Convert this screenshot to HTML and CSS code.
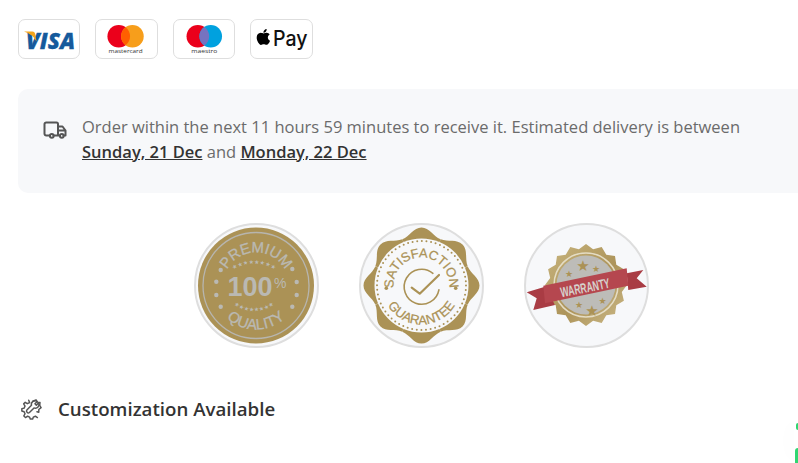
FILE: index.html
```html
<!DOCTYPE html>
<html lang="en">
<head>
<meta charset="utf-8">
<title>Delivery and guarantees</title>
<link rel="stylesheet" href="styles.css">
</head>
<body>
<main class="page">
  <ul class="pay-list">
    <li class="pay-card">
      <svg class="pay-logo" viewBox="0 0 60.330 38">
        <text class="visa-text" x="7" y="28.500" textLength="49" lengthAdjust="spacingAndGlyphs">VISA</text>
        <path class="visa-flick" d="M5 11.500H13.500Q15.500 11.700 16 13.500L17.500 21.500Q14 14.500 5 11.500Z"/>
      </svg>
    </li>
    <li class="pay-card">
      <svg class="pay-logo" viewBox="0 0 60.330 38">
        <circle class="mc-red" cx="22.700" cy="16.300" r="11.300"/>
        <circle class="mc-orange" cx="36.400" cy="16.300" r="11.300"/>
        <path class="mc-mid" d="M29.550 7.300a11.300 11.300 0 0 1 0 18a11.300 11.300 0 0 1 0-18Z"/>
        <text class="brand-small" x="29.600" y="33" textLength="34" lengthAdjust="spacingAndGlyphs">mastercard</text>
      </svg>
    </li>
    <li class="pay-card">
      <svg class="pay-logo" viewBox="0 0 60.330 38">
        <circle class="mc-red" cx="23.800" cy="16.300" r="11.300"/>
        <circle class="ma-blue" cx="36.700" cy="16.300" r="11.300"/>
        <path class="ma-mid" d="M30.250 7a11.300 11.300 0 0 1 0 18.600a11.300 11.300 0 0 1 0-18.600Z"/>
        <text class="brand-small" x="30.300" y="33" textLength="26" lengthAdjust="spacingAndGlyphs">maestro</text>
      </svg>
    </li>
    <li class="pay-card">
      <svg class="pay-logo" viewBox="0 0 60.330 38">
        <path class="apple" transform="translate(1.800 6.400) scale(.88)" d="M17.050 20.280c-.98.95-2.050.8-3.080.35-1.090-.46-2.090-.48-3.240 0-1.440.62-2.200.44-3.060-.35C2.790 15.250 3.510 7.590 9.050 7.310c1.350.07 2.290.74 3.080.8 1.180-.24 2.310-.93 3.570-.84 1.510.12 2.650.72 3.400 1.800-3.120 1.870-2.380 5.980.48 7.130-.57 1.500-1.310 2.990-2.540 4.090zM12.030 7.250c-.15-2.230 1.660-4.070 3.740-4.250.29 2.580-2.340 4.500-3.740 4.250z"/>
        <text class="apple-pay" x="22" y="25.500" textLength="34.500" lengthAdjust="spacingAndGlyphs">Pay</text>
      </svg>
    </li>
  </ul>

  <section class="delivery">
    <svg class="truck" viewBox="0 0 24 18">
      <path d="M7 14.500H3.200A1.700 1.700 0 0 1 1.500 12.800V3.200A1.700 1.700 0 0 1 3.200 1.500H13.500a1.500 1.500 0 0 1 1.500 1.500V14.500H10.500M15 5.500H19.500L22.500 9.500V14.500H20.500M15 9.500H22.500M15 14.500H17"/>
      <circle cx="8.800" cy="14.800" r="1.900"/>
      <circle cx="18.800" cy="14.800" r="1.900"/>
    </svg>
    <p class="delivery-text">Order within the next 11 hours 59 minutes to receive it. Estimated delivery is between <a class="date" href="#">Sunday, 21 Dec</a> and <a class="date" href="#">Monday, 22 Dec</a></p>
  </section>

  <section class="badges">
    <div class="badge">
      <svg viewBox="0 0 121 121">
        <defs>
          <path id="p-top" d="M29 71.800A33 33 0 1 1 91 71.800"/>
          <path id="p-bot" d="M16 60.500a44 44 0 0 0 88 0"/>
          <path id="p-star-top" d="M28 60.500a30 21.500 0 0 1 60 0"/>
          <path id="p-star-bot" d="M28 60.500a30 26 0 0 0 60 0"/>
          <path id="s-top" d="M34.200 70.100A28 28 0 1 1 86.800 70.100"/>
          <path id="s-bot" d="M21.500 60.500a39 39 0 0 0 78 0"/>
          <path id="lobe" d="M0 0L-19.100 -46.200C-11.700 -49.300 -8 -58 0 -58C8 -58 11.700 -49.300 19.100 -46.200Z"/>
        </defs>
        <circle class="gold" cx="60" cy="60.500" r="58"/>
        <circle class="silver-ring" cx="60" cy="60.500" r="53"/>
        <text class="arc-silver"><textPath href="#p-top" startOffset="50%">PREMIUM</textPath></text>
        <text class="arc-silver"><textPath href="#p-bot" startOffset="50%">QUALITY</textPath></text>
        <text class="hundred" x="54" y="71">100</text>
        <text class="percent" x="78" y="63">%</text>
        <text class="stars"><textPath href="#p-star-top" startOffset="50%">★★★★★★★★</textPath></text>
        <text class="stars"><textPath href="#p-star-bot" startOffset="50%">★★★★★★★★</textPath></text>
        <g class="silver-dots">
          <circle cx="24.700" cy="45" r="2.200"/><circle cx="20.300" cy="56.700" r="2.200"/><circle cx="20.300" cy="70" r="2.200"/><circle cx="24.700" cy="81.700" r="2.200"/>
          <circle cx="96.300" cy="44" r="2.200"/><circle cx="100.700" cy="57" r="2.200"/><circle cx="100.700" cy="70" r="2.200"/><circle cx="96.300" cy="81.700" r="2.200"/>
        </g>
      </svg>
    </div>
    <div class="badge">
      <svg viewBox="0 0 121 121">
        <g class="gold" transform="translate(60.500 60.500)">
          <use href="#lobe"/>
          <use href="#lobe" transform="rotate(45)"/>
          <use href="#lobe" transform="rotate(90)"/>
          <use href="#lobe" transform="rotate(135)"/>
          <use href="#lobe" transform="rotate(180)"/>
          <use href="#lobe" transform="rotate(225)"/>
          <use href="#lobe" transform="rotate(270)"/>
          <use href="#lobe" transform="rotate(315)"/>
        </g>
        <circle class="inner-white" cx="60.500" cy="60.500" r="47"/>
        <circle class="dot-ring" cx="60.500" cy="60.500" r="44.500"/>
        <text class="arc-gold"><textPath href="#s-top" startOffset="50%">SATISFACTION</textPath></text>
        <text class="arc-gold"><textPath href="#s-bot" startOffset="50%">GUARANTEE</textPath></text>
        <circle class="gold" cx="25.300" cy="63.300" r="1.800"/>
        <circle class="gold" cx="94.700" cy="63.300" r="1.800"/>
        <path class="check-ring" d="M77.900 64.800A17.500 17.500 0 1 1 71.900 48.300"/>
        <path class="check" d="M50.700 62.700L58.700 68.700L78 50"/>
      </svg>
    </div>
    <div class="badge">
      <svg viewBox="0 0 121 121">
        <defs>
          <linearGradient id="seal-gold" x1="0" y1="0" x2="1" y2="1">
            <stop offset="0" stop-color="#c9b680"/>
            <stop offset=".55" stop-color="#ad945a"/>
            <stop offset="1" stop-color="#cdbb8a"/>
          </linearGradient>
        </defs>
        <polygon class="seal" transform="translate(60 60)" points="41,0 35.800,7.100 37.900,15.700 30.300,20.300 29,29 20.300,30.300 15.700,37.900 7.100,35.800 0,41 -7.100,35.800 -15.700,37.900 -20.300,30.300 -29,29 -30.300,20.300 -37.900,15.700 -35.800,7.100 -41,0 -35.800,-7.100 -37.900,-15.700 -30.300,-20.300 -29,-29 -20.300,-30.300 -15.700,-37.900 -7.100,-35.800 0,-41 7.100,-35.800 15.700,-37.900 20.300,-30.300 29,-29 30.300,-20.300 37.900,-15.700 35.800,-7.100"/>
        <circle class="seal-ring" cx="60" cy="60" r="32"/>
        <circle class="seal-face" cx="60" cy="60" r="29.500"/>
        <text class="seal-star big" x="57" y="46">★</text>
        <text class="seal-star" x="43" y="52">★</text>
        <text class="seal-star" x="70" y="47">★</text>
        <text class="seal-star big" x="66" y="91">★</text>
        <text class="seal-star" x="53" y="83">★</text>
        <text class="seal-star" x="76.500" y="79">★</text>
        <path class="ribbon-tail" d="M19 61.700L.7 67.300L10.700 73.300L7.300 85L29 80Z"/>
        <path class="ribbon-tail" d="M100.700 48.300L117.300 45L110.700 53.300L120.700 61.700L102.300 65Z"/>
        <path class="ribbon" d="M17.300 60.700L100.700 43.300L102.300 60.700L19 78.300Z"/>
        <text class="ribbon-text" transform="translate(60 67.500) rotate(-11)" textLength="50" lengthAdjust="spacingAndGlyphs">WARRANTY</text>
      </svg>
    </div>
  </section>

  <h2 class="custom-title">
    <svg class="gear" viewBox="0 0 24 24">
      <path d="M9.500 2.500L10.500 5L8 6.200L5.700 4.700L4 6.400L5.500 8.800L4.500 11L2 11.700V14.200L4.500 15L5.500 17.200L4.200 19.600L6 21.300L8.300 19.900L10.500 20.900L11.200 23H13.800L14.500 20.900L16.800 19.900L19 21.300"/>
      <path d="M14 3.500L17.500 2L19 4.500L21.800 5L21.500 8L23 10.500L20.500 12.500L20.500 15.500L18.500 15"/>
      <path d="M18.800 3.800L16.300 6.300L17.800 7.800L20.300 5.300A4 4 0 0 1 15.300 10.800L10.300 15.800A2 2 0 0 1 7.500 13L12.500 8A4 4 0 0 1 18.800 3.800Z"/>
    </svg>
    <span>Customization Available</span>
  </h2>
</main>
<div class="chat-widget" aria-hidden="true">
  <span class="chat-dot"></span>
  <span class="chat-button"></span>
</div>
</body>
</html>
```
FILE: styles.css
```css
* { box-sizing: border-box; }
html, body { margin: 0; height: 100%; overflow: hidden; background: #fff; }
body { font-family: "Open Sans", "Noto Sans", sans-serif; color: #333; }
.page { width: 806px; margin-left: 18px; padding-top: 19px; }

.pay-list { display: flex; gap: 15px; list-style: none; margin: 0; padding: 0; }
.pay-card { width: 62.400px; height: 40px; border: 1px solid #dedede; border-radius: 7px; background: #fff; display: flex; }
.pay-logo { width: 100%; height: 100%; display: block; }
.visa-flick { fill: #f4a51c; }
.visa-text { font: italic 800 23.500px "Open Sans", sans-serif; fill: #155a9c; stroke: #155a9c; stroke-width: .3px; }
.mc-red { fill: #eb001b; }
.mc-orange { fill: #f79e1b; }
.mc-mid { fill: #ff5f00; }
.ma-blue { fill: #00a1df; }
.ma-mid { fill: #7673c0; }
.brand-small { font: 500 6px "Open Sans", sans-serif; fill: #333; text-anchor: middle; }
.apple { fill: #000; }
.apple-pay { font: 500 21px "Inter", sans-serif; fill: #111; }

.delivery { display: flex; align-items: flex-start; gap: 15px; margin-top: 30px; height: 104px; padding: 25px; background: #f7f8fa; border-radius: 10px; }
.truck { width: 24px; height: 18px; flex: none; margin-top: 7px; fill: none; stroke: #555; stroke-width: 2; stroke-linejoin: round; stroke-linecap: round; }
.delivery-text { margin: 0; width: 690px; font-size: 16.500px; line-height: 25px; color: #6b6b6b; }
.date { color: #333; font-weight: 600; text-decoration: underline; }

.badges { display: flex; justify-content: center; gap: 40px; margin-top: 30px; }
.badge { width: 125px; height: 125px; flex: none; border: 2px solid #dedede; border-radius: 50%; background: #f7f8fa; overflow: hidden; }
.badge svg { width: 100%; height: 100%; display: block; overflow: visible; }
.gold { fill: #ab9256; }
.silver-ring { fill: none; stroke: #b7b5ae; stroke-width: 1.300; }
.arc-silver { font: 400 15px "Liberation Sans", sans-serif; fill: #bab9b3; stroke: #bab9b3; stroke-width: .3px; text-anchor: middle; }
.hundred { font: 700 27px "Liberation Sans", sans-serif; fill: #bab9b3; text-anchor: middle; }
.percent { font: 400 14px "Liberation Sans", sans-serif; fill: #bab9b3; }
.stars { font: 6px "DejaVu Sans", sans-serif; fill: #bab9b3; text-anchor: middle; }
.silver-dots { fill: #bab9b3; }
.inner-white { fill: #f7f8fa; }
.dot-ring { fill: none; stroke: #ab9256; stroke-width: 2; stroke-linecap: round; stroke-dasharray: 0 4.660; }
.arc-gold { font: 400 13px "Liberation Sans", sans-serif; fill: #ab9256; stroke: #ab9256; stroke-width: .25px; text-anchor: middle; }
.check-ring { fill: none; stroke: #ab9256; stroke-width: 1.600; stroke-linecap: round; }
.check { fill: none; stroke: #ab9256; stroke-width: 2.200; stroke-linecap: round; stroke-linejoin: round; }
.seal { fill: url(#seal-gold); }
.seal-ring { fill: none; stroke: #e4dcc4; stroke-width: 1.500; }
.seal-face { fill: #bdbcb8; }
.seal-star { font: 9px "DejaVu Sans", sans-serif; fill: #ab9256; text-anchor: middle; }
.seal-star.big { font-size: 15px; }
.ribbon { fill: #b5474f; }
.ribbon-tail { fill: #a93c44; }
.ribbon-text { font: 700 14px "Liberation Sans", sans-serif; fill: #d6d2cd; text-anchor: middle; }

.custom-title { display: flex; align-items: center; gap: 16px; margin: 50px 0 0 2px; font-size: 18.700px; line-height: 22px; font-weight: 600; color: #333; }
.gear { width: 22px; height: 22px; flex: none; fill: none; stroke: #555; stroke-width: 1.600; stroke-linejoin: round; stroke-linecap: round; }

.chat-widget { position: fixed; right: 0; bottom: 0; width: 4px; height: 44px; box-shadow: 0 0 24px rgba(0, 0, 0, .05); }
.chat-dot { position: absolute; right: 0; top: 4px; width: 2px; height: 7px; background: #2fd671; border-radius: 2px 0 0 2px; }
.chat-button { position: absolute; right: 0; bottom: 0; width: 3px; height: 15px; background: #2fd671; border-radius: 3px 0 0 0; }
```
